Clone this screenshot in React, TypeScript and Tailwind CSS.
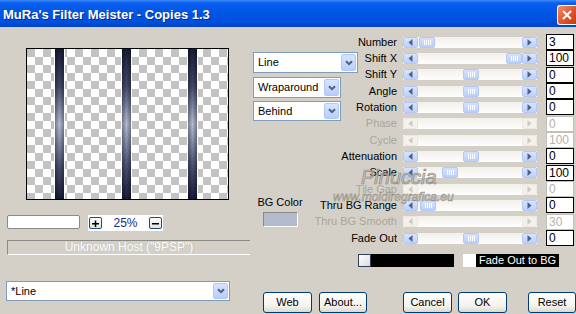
import React from 'react';
import clsx from 'clsx';

type Row = { label: string; value: string; thumb?: number; off?: boolean };

const rows: Row[] = [
  { label: 'Number', value: '3', thumb: 1 },
  { label: 'Shift X', value: '100', thumb: 88 },
  { label: 'Shift Y', value: '0', thumb: 45 },
  { label: 'Angle', value: '0', thumb: 45 },
  { label: 'Rotation', value: '0', thumb: 45 },
  { label: 'Phase', value: '0', off: true },
  { label: 'Cycle', value: '100', off: true },
  { label: 'Attenuation', value: '0', thumb: 45 },
  { label: 'Scale', value: '100', thumb: 24 },
  { label: 'Tile Gap', value: '0', off: true },
  { label: 'Thru BG Range', value: '0', thumb: 2 },
  { label: 'Thru BG Smooth', value: '30', off: true },
  { label: 'Fade Out', value: '0', thumb: 45 },
];

const Arrow = ({ dir, off }: { dir: 'l' | 'r'; off?: boolean }) => (
  <div
    className={clsx(
      'flex h-full w-[15px] shrink-0 items-center justify-center rounded-[2px] border',
      off ? 'border-[#ebe9e2] bg-[#f3f1eb]' : 'border-[#b4c8f6] bg-[linear-gradient(to_bottom,#d8e4fe,#bdd0fb)]'
    )}
  >
    <svg width="5" height="7" viewBox="0 0 5 7">
      <path d={dir === 'l' ? 'M4.5 0 L0.5 3.5 L4.5 7Z' : 'M0.5 0 L4.5 3.5 L0.5 7Z'} fill={off ? '#cdcbc0' : '#4d6185'} />
    </svg>
  </div>
);

const ScrollBar = ({ thumb, off }: { thumb?: number; off?: boolean }) => (
  <div className="flex h-[11px] w-[134px] shrink-0 bg-[linear-gradient(to_bottom,#f2f0ea,#fefefd)]">
    <Arrow dir="l" off={off} />
    <div className="flex flex-1 items-stretch">
      {!off && thumb !== undefined && (
        <>
          <div style={{ width: thumb }} />
          <div className="flex w-[16px] items-center justify-center gap-px rounded-[2px] border border-[#b4c8f6] bg-[linear-gradient(to_bottom,#d4e0fd,#bccffb)]">
            {[0, 1, 2, 3].map((i) => (
              <div key={i} className="h-[5px] w-px bg-white" />
            ))}
          </div>
        </>
      )}
    </div>
    <Arrow dir="r" off={off} />
  </div>
);

const Chevron = () => (
  <svg width="8" height="6" viewBox="0 0 8 6">
    <path d="M1 1.2 L4 4.2 L7 1.2" stroke="#4d6185" strokeWidth="2" fill="none" />
  </svg>
);

const Combo = ({ text, className }: { text: string; className: string }) => (
  <div className={clsx('flex items-stretch border border-[#7f9db9] bg-white p-px', className)}>
    <div className="flex flex-1 items-center pl-[3px]">{text}</div>
    <div className="flex w-[15px] items-center justify-center rounded-[2px] border border-[#b4c8f6] bg-[linear-gradient(to_bottom,#d8e4fe,#b9cdfb)]">
      <Chevron />
    </div>
  </div>
);

const XpButton = ({ text, className }: { text: string; className: string }) => (
  <div
    className={clsx(
      'flex h-[21px] items-center justify-center rounded-[3px] border border-[#003c74] bg-[linear-gradient(to_bottom,#ffffff,#f3f2ec_70%,#dcd8cc)]',
      className
    )}
  >
    {text}
  </div>
);

const Preview = () => {
  const stripes = [28, 95, 161];
  return (
    <svg width="201" height="150" viewBox="0 0 201 150">
      <defs>
        <pattern id="chk" width="16" height="16" patternUnits="userSpaceOnUse">
          <rect width="16" height="16" fill="#ffffff" />
          <rect width="8" height="8" fill="#c3c3c3" />
          <rect x="8" y="8" width="8" height="8" fill="#c3c3c3" />
        </pattern>
        <linearGradient id="vg" x1="0" y1="0" x2="0" y2="1">
          <stop offset="0" stopColor="#191c38" />
          <stop offset="0.25" stopColor="#444a6c" />
          <stop offset="0.5" stopColor="#b3bbd2" />
          <stop offset="0.78" stopColor="#4a5072" />
          <stop offset="1" stopColor="#191c38" />
        </linearGradient>
        <linearGradient id="hg" x1="0" y1="0" x2="1" y2="0">
          <stop offset="0" stopColor="#000" stopOpacity="0.35" />
          <stop offset="0.5" stopColor="#000" stopOpacity="0" />
          <stop offset="1" stopColor="#000" stopOpacity="0.35" />
        </linearGradient>
      </defs>
      <rect width="201" height="150" fill="url(#chk)" />
      {stripes.map((x) => (
        <g key={x}>
          <rect x={x - 1} y="0" width="1" height="150" fill="#ffffff" />
          <rect x={x} y="0" width="9" height="150" fill="url(#vg)" />
          <rect x={x} y="0" width="9" height="150" fill="url(#hg)" />
          <rect x={x + 9} y="0" width="1" height="150" fill="#ffffff" />
        </g>
      ))}
    </svg>
  );
};

const SmallBtn = ({ sign }: { sign: '+' | '-' }) => (
  <div className="flex h-[12px] w-[13px] items-center justify-center rounded-[2px] border border-[#1c4f7a] bg-[linear-gradient(to_bottom,#ffffff,#e4e1d8)]">
    <svg width="7" height="7" viewBox="0 0 7 7">
      <rect x="0" y="3" width="7" height="1.5" fill="#000" />
      {sign === '+' && <rect x="2.75" y="0.5" width="1.5" height="6.5" fill="#000" />}
    </svg>
  </div>
);

export default function App() {
  return (
    <div className="relative h-[314px] w-[576px] overflow-hidden bg-[#d4d0c8] font-['Liberation_Sans',Arial,sans-serif] text-[11px] leading-[13px] text-black">
      {/* Title bar */}
      <div className="flex h-[27px] items-start justify-between bg-[linear-gradient(to_bottom,#3d8cf8_0px,#0a5ef0_3px,#0054e3_14px,#0150dd_22px,#0044c8_27px)]">
        <div className="pl-[3px] pt-[7px] text-[13px] font-bold leading-[15px] text-white [text-shadow:1px_1px_0_#0a2a8a]">
          MuRa's Filter Meister - Copies 1.3
        </div>
        <div className="mt-[5px] flex h-[20px] w-[19px] items-center justify-center rounded-l-[3px] border border-r-0 border-white bg-[linear-gradient(135deg,#f0906c,#e0542c_55%,#c63a14)]">
          <svg width="10" height="10" viewBox="0 0 10 10">
            <path d="M1 1 L9 9 M9 1 L1 9" stroke="#fff" strokeWidth="2" />
          </svg>
        </div>
      </div>

      <div className="flex h-[287px]">
        {/* Left column */}
        <div className="flex w-[250px] shrink-0 flex-col">
          <div className="ml-[26px] mt-[21px] h-[152px] w-[203px] border border-black">
            <Preview />
          </div>
          <div className="mt-[15px] flex items-start">
            <div className="ml-[7px] h-[14px] w-[73px] rounded-[2px] border border-[#8a8a86] bg-white" />
            <div className="ml-[8px] flex h-[16px] w-[75px] items-center bg-white">
              <div className="ml-[1px]">
                <SmallBtn sign="+" />
              </div>
              <div className="flex-1 text-center text-[12px] text-[#1d2a7a]">25%</div>
              <div className="mr-[1px]">
                <SmallBtn sign="-" />
              </div>
            </div>
          </div>
          <div className="ml-[7px] mt-[9px] flex h-[15px] w-[243px] items-center justify-center border-b border-l border-t border-b-white border-l-[#8d8a84] border-t-[#8d8a84] text-[12px] text-white [text-shadow:0_0_1px_#b8b4ac]">
            Unknown Host ("9PSP")
          </div>
          <Combo text="*Line" className="ml-[6px] mt-[26px] h-[20px] w-[224px]" />
        </div>

        {/* Right part */}
        <div className="flex flex-1 flex-col">
          <div className="flex h-[220px]">
            <div className="flex w-[108px] shrink-0 flex-col pl-[3px]">
              <Combo text="Line" className="mt-[25px] h-[21px] w-[105px]" />
              <Combo text="Wraparound" className="mt-[4px] h-[21px] w-[88px]" />
              <Combo text="Behind" className="mt-[3px] h-[20px] w-[88px]" />
              <div className="ml-[2px] mt-[75px] flex w-[50px] flex-col items-center">
                <div className="whitespace-nowrap">BG Color</div>
                <div className="mt-[3px] h-[15px] w-[35px] border border-b-white border-l-[#8d8a84] border-r-white border-t-[#8d8a84] bg-[#b1bbcb]" />
              </div>
            </div>
            <div className="flex flex-col pt-[7px]">
              {rows.map((r) => (
                <div key={r.label} className="flex h-[16.33px] items-center">
                  <div
                    className={clsx(
                      'flex w-[39px] justify-end whitespace-nowrap',
                      r.off ? 'text-[#a9a699]' : 'text-black'
                    )}
                  >
                    {r.label}
                  </div>
                  <div className="ml-[6px]">
                    <ScrollBar thumb={r.thumb} off={r.off} />
                  </div>
                  <div
                    className={clsx(
                      'ml-[9px] h-[16px] w-[28px] border pl-[2px] text-[12px] leading-[14px]',
                      r.off ? 'border-[#c2bfb6] bg-white text-[#b5b2a8]' : 'border-black bg-white text-black'
                    )}
                  >
                    {r.value}
                  </div>
                </div>
              ))}
            </div>
          </div>

          {/* Colour bar */}
          <div className="mt-[7px] flex h-[13px] items-stretch pl-[108px]">
            <div className="w-[13px] border border-[#33405a] bg-[linear-gradient(135deg,#ffffff,#dcdcdc)]" />
            <div className="w-[83px] bg-black" />
            <div className="ml-[9px] w-[13px] bg-white" />
            <div className="flex w-[83px] items-center overflow-hidden whitespace-nowrap bg-black pl-[3px] text-[11px] leading-[13px] text-white">
              Fade Out to BG
            </div>
          </div>

          {/* Buttons */}
          <div className="mt-[25px] flex pl-[13px]">
            <XpButton text="Web" className="w-[49px]" />
            <XpButton text="About..." className="ml-[7px] w-[48px]" />
            <XpButton text="Cancel" className="ml-[36px] w-[49px]" />
            <XpButton text="OK" className="ml-[6px] w-[49px]" />
            <XpButton text="Reset" className="ml-[21px] w-[48px]" />
          </div>
        </div>
      </div>

      {/* Watermark */}
      <div className="pointer-events-none absolute left-[361px] top-[166px] text-[20px] italic leading-[22px] text-[#c4c0b8]/70 [-webkit-text-stroke:0.7px_#8e8a82]">
        Pinuccia
      </div>
      <div className="pointer-events-none absolute left-[333px] top-[191px] text-[12px] italic leading-[13px] text-[#d8d5ce]/60 [-webkit-text-stroke:0.5px_#8e8a82]">
        www.moidiregrafica.eu
      </div>
    </div>
  );
}
